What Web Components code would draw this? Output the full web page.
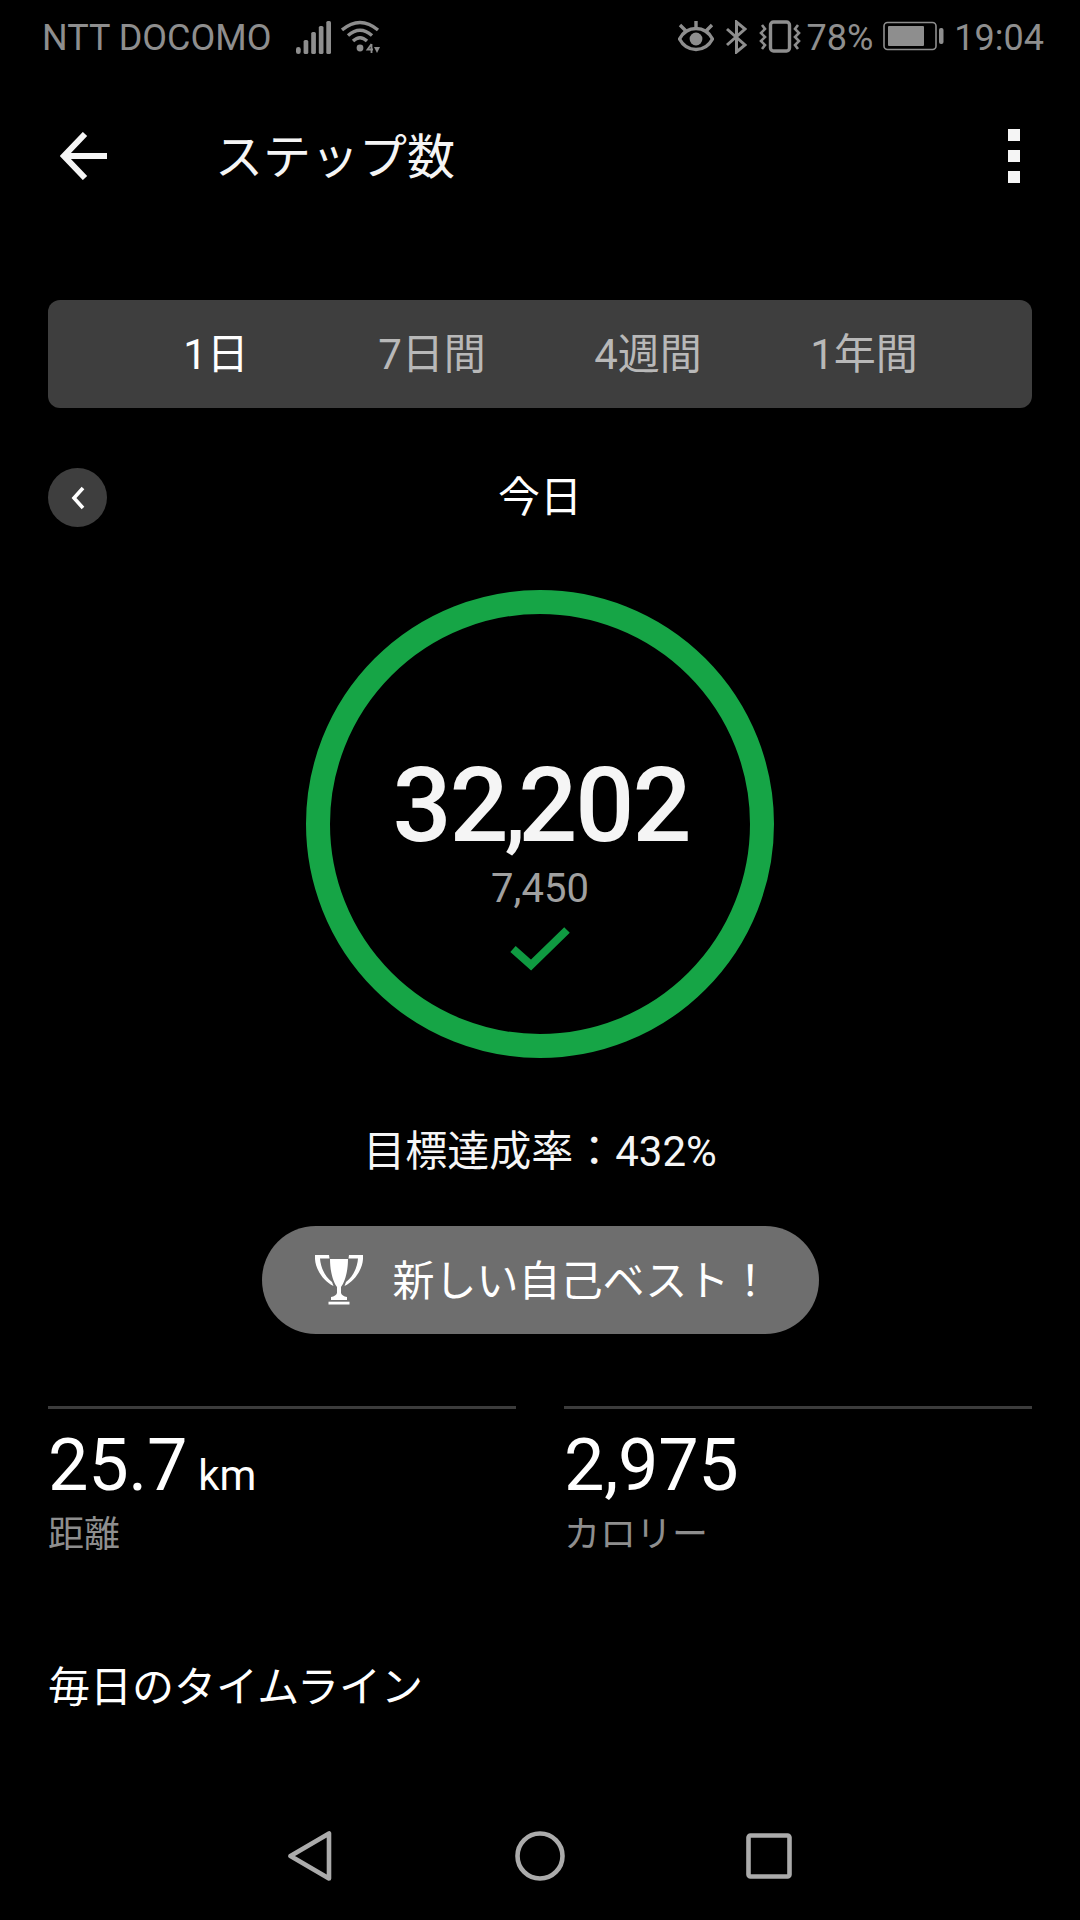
<!DOCTYPE html>
<html lang="ja">
<head>
<meta charset="utf-8">
<title>ステップ数</title>
<style>
  html, body {
    background: #000;
    margin: 0;
    padding: 0;
  }

  body {
    color: #f5f5f5;
    font-family: Roboto, 'Noto Sans CJK JP', sans-serif;
    height: 1920px;
    overflow: hidden;
    width: 1080px;
  }
</style>
</head>
<body>
<step-screen>
  <status-bar></status-bar>
  <app-bar title="ステップ数"></app-bar>
  <range-tabs></range-tabs>
  <day-header label="今日"></day-header>
  <step-ring steps="32,202" goal="7,450"></step-ring>
  <goal-rate>目標達成率：432%</goal-rate>
  <best-pill>新しい自己ベスト！</best-pill>
  <stat-row>
    <stat-cell label="距離" value="25.7" unit="km"></stat-cell>
    <stat-cell label="カロリー" value="2,975"></stat-cell>
  </stat-row>
  <section-title>毎日のタイムライン</section-title>
  <nav-bar></nav-bar>
</step-screen>

<script>
  // Small helper, every element below renders once into an open shadow root
  class BaseElement extends HTMLElement {
    constructor() {
      super();
      this.attachShadow( {mode: 'open'} );
    }

    connectedCallback() {
      this.shadowRoot.innerHTML = this.render();
    }

    attr( name ) {
      return this.hasAttribute( name ) ? this.getAttribute( name ) : '';
    }
  }

  class StepScreen extends BaseElement {
    render() {
      return /* template */ `
        <style>
          :host {
            box-sizing: border-box;
            display: flex;
            flex-direction: column;
            height: 1920px;
            width: 1080px;
          }
        </style>
        <slot></slot>
      `;
    }
  }

  class StatusBar extends BaseElement {
    render() {
      return /* template */ `
        <style>
          :host {
            align-items: center;
            box-sizing: border-box;
            color: #8e8e8e;
            display: flex;
            flex-direction: row;
            font-size: 36px;
            height: 72px;
            padding: 2px 36px 0 42px;
          }

          span {
            line-height: 72px;
            padding-top: 1px;
          }

          svg {
            display: block;
            flex: none;
          }

          .carrier {
            align-items: center;
            display: flex;
            flex-grow: 1;
          }
        </style>
        <div class="carrier">
          <span>NTT DOCOMO</span>
          <svg style="margin-left: 25px" width="35" height="33" viewBox="0 0 35 33" fill="#8e8e8e">
            <rect x="0" y="26" width="4.7" height="7" rx="2.3"/>
            <rect x="7.6" y="19" width="4.7" height="14" rx="1.6"/>
            <rect x="15.2" y="11" width="4.7" height="22" rx="1.6"/>
            <rect x="22.8" y="5" width="4.7" height="28" rx="1.6"/>
            <rect x="30.3" y="0" width="4.7" height="33" rx="1.6"/>
          </svg>
          <svg style="margin-left: 10px" width="39" height="34" viewBox="0 0 39 34" fill="none" stroke="#8e8e8e" stroke-width="3.4">
            <path d="M1 10 Q19 -5 37 10"/>
            <path d="M7 15.5 Q19 5 31 15.5"/>
            <path d="M12 21 Q19 14.5 26 21"/>
            <circle cx="19" cy="28" r="3.4" fill="#8e8e8e" stroke="none"/>
            <path d="M30.5 24 L26.5 29.5 H32 M30.5 24 V33" stroke-width="1.8"/>
            <path d="M33 27 H39 L36 33 Z" fill="#8e8e8e" stroke="none"/>
          </svg>
        </div>
        <svg width="36" height="32" viewBox="0 0 36 32" fill="none" stroke="#8e8e8e" stroke-width="3.4">
          <path d="M1.5 18 C9 4 27 4 34.5 18 C27 32 9 32 1.5 18 Z"/>
          <circle cx="18" cy="18" r="6.4" fill="#8e8e8e" stroke="none"/>
          <path d="M2 4 L8 10 M18 0 V6 M34 4 L28 10"/>
        </svg>
        <svg style="margin-left: 12px" width="21" height="34" viewBox="0 0 21 34" fill="none" stroke="#8e8e8e" stroke-width="3">
          <path d="M1 9 L19 25 L10.5 32 V2 L19 9 L1 25"/>
        </svg>
        <svg style="margin-left: 12px" width="42" height="34" viewBox="0 0 42 34" fill="none" stroke="#8e8e8e" stroke-width="3">
          <rect x="11.5" y="2" width="19" height="29" rx="3" stroke-width="3.4"/>
          <path d="M3 5 L6 9 L2 13 L6 17 L2 21 L6 25 L3 29" stroke-width="2.6"/>
          <path d="M39 5 L36 9 L40 13 L36 17 L40 21 L36 25 L39 29" stroke-width="2.6"/>
        </svg>
        <span style="margin-left: 6px">78%</span>
        <svg style="margin-left: 10px" width="61" height="32" viewBox="0 0 61 32">
          <rect x="1" y="1.5" width="52" height="27" rx="3.5" fill="none" stroke="#8e8e8e" stroke-width="1.6"/>
          <rect x="5" y="5" width="36" height="20" rx="1" fill="#8e8e8e"/>
          <rect x="56" y="7" width="4.5" height="16" rx="2" fill="#8e8e8e"/>
        </svg>
        <span style="margin-left: 10px">19:04</span>
      `;
    }
  }

  class AppBar extends BaseElement {
    render() {
      return /* template */ `
        <style>
          :host {
            align-items: center;
            box-sizing: border-box;
            display: flex;
            flex-direction: row;
            height: 168px;
            padding: 0 60px 0 60px;
          }

          h1 {
            flex-grow: 1;
            font-family: 'Noto Sans CJK JP', sans-serif;
            font-size: 48px;
            font-weight: 400;
            margin: 0 0 6px 108px;
          }

          div {
            display: flex;
            flex-direction: column;
            gap: 9px;
          }

          i {
            background: #f5f5f5;
            display: block;
            height: 12px;
            width: 12px;
          }
        </style>
        <svg width="47" height="48" viewBox="0 0 47 48" fill="none" stroke="#f5f5f5" stroke-width="6">
          <path d="M47 24 H4"/>
          <path d="M25 2 L4 24 L25 46"/>
        </svg>
        <h1>${this.attr( 'title' )}</h1>
        <div><i></i><i></i><i></i></div>
      `;
    }
  }

  class RangeTabs extends BaseElement {
    render() {
      const tabs = ['1日', '7日間', '4週間', '1年間'];

      return /* template */ `
        <style>
          :host {
            background: #3e3e3e;
            border-radius: 12px;
            box-sizing: border-box;
            display: grid;
            grid-template-columns: repeat( 4, 216px );
            height: 108px;
            justify-content: center;
            margin: 60px 48px 0 48px;
          }

          span {
            color: #b8b8b8;
            font-size: 42px;
            line-height: 110px;
            text-align: center;
          }

          span:first-of-type {
            color: #fff;
          }
        </style>
        ${tabs.map( ( tab ) => `<span>${tab}</span>` ).join( '' )}
      `;
    }
  }

  class DayHeader extends BaseElement {
    render() {
      return /* template */ `
        <style>
          :host {
            align-items: center;
            display: grid;
            grid-template-columns: 59px 1fr 59px;
            margin: 60px 48px 0 48px;
          }

          button {
            align-items: center;
            background: #3e3e3e;
            border: none;
            border-radius: 50%;
            display: flex;
            height: 59px;
            justify-content: center;
            padding: 0;
            width: 59px;
          }

          span {
            color: #fff;
            font-size: 42px;
            line-height: 52px;
            text-align: center;
          }
        </style>
        <button>
          <svg width="14" height="24" viewBox="0 0 14 24" fill="none" stroke="#fff" stroke-width="3.6">
            <path d="M12 2 L3 12 L12 22"/>
          </svg>
        </button>
        <span>${this.attr( 'label' )}</span>
      `;
    }
  }

  class StepRing extends BaseElement {
    render() {
      // The comma sits tight between the digits
      const steps = this.attr( 'steps' ).replace( /(\d),/, '<span class="tail">$1</span><span class="comma">,</span>' );

      return /* template */ `
        <style>
          :host {
            align-items: center;
            align-self: center;
            box-sizing: border-box;
            display: flex;
            flex-direction: column;
            height: 468px;
            margin-top: 63px;
            position: relative;
            width: 468px;
          }

          svg.ring {
            left: 0;
            position: absolute;
            top: 0;
          }

          .steps {
            color: #f5f5f5;
            font-size: 104px;
            font-weight: 500;
            letter-spacing: -2px;
            line-height: 104px;
            margin-top: 164px;
            padding-left: 2px;
          }

          .tail {
            letter-spacing: -4px;
          }

          .comma {
            font-size: 92px;
            letter-spacing: -7px;
          }

          .goal {
            color: #a0a0a0;
            font-size: 40px;
            line-height: 46px;
            margin-top: 4px;
          }

          .check {
            margin-top: 15px;
          }
        </style>
        <svg class="ring" width="468" height="468" viewBox="0 0 468 468">
          <circle cx="234" cy="234" r="222" fill="none" stroke="#16a546" stroke-width="24"/>
        </svg>
        <div class="steps">${steps}</div>
        <div class="goal">${this.attr( 'goal' )}</div>
        <svg class="check" width="60" height="44" viewBox="0 0 60 44" fill="none" stroke="#0f9a41" stroke-width="8">
          <path d="M3 22 L21 38 L57 3"/>
        </svg>
      `;
    }
  }

  class GoalRate extends BaseElement {
    render() {
      return /* template */ `
        <style>
          :host {
            color: #f5f5f5;
            display: block;
            font-size: 42px;
            line-height: 60px;
            margin-top: 64px;
            text-align: center;
          }
        </style>
        <slot></slot>
      `;
    }
  }

  class BestPill extends BaseElement {
    render() {
      return /* template */ `
        <style>
          :host {
            align-items: center;
            align-self: center;
            background: #6e6e6e;
            border-radius: 54px;
            box-sizing: border-box;
            color: #fff;
            display: flex;
            flex-direction: row;
            font-size: 42px;
            gap: 29px;
            height: 108px;
            margin-top: 44px;
            padding: 0 0 0 52px;
            width: 557px;
          }

          svg {
            flex: none;
          }

          span {
            margin-bottom: 6px;
          }
        </style>
        <svg width="50" height="50" viewBox="0 0 50 50" fill="#fff">
          <path d="M16 4 H34 C34 16 31 27 27 32 V38 Q28 41 33 42 V45 H17 V42 Q22 41 23 38 V32 C19 27 16 16 16 4 Z"/>
          <path d="M1 0 H15 L15.5 3.5 H6 C6.5 12 11 22 18 27 L19.5 31 C9 26 1.5 14 1 4 Z"/>
          <path d="M49 0 H35 L34.5 3.5 H44 C43.5 12 39 22 32 27 L30.5 31 C41 26 48.5 14 49 4 Z"/>
          <rect x="14.5" y="46.7" width="21" height="2.8"/>
        </svg>
        <span><slot></slot></span>
      `;
    }
  }

  class StatRow extends BaseElement {
    render() {
      return /* template */ `
        <style>
          :host {
            display: grid;
            gap: 48px;
            grid-template-columns: 1fr 1fr;
            margin: 72px 48px 0 48px;
          }
        </style>
        <slot></slot>
      `;
    }
  }

  class StatCell extends BaseElement {
    render() {
      const unit = this.attr( 'unit' );

      return /* template */ `
        <style>
          :host {
            border-top: solid 3px #3c3c3c;
            display: block;
          }

          .value {
            color: #fff;
            font-size: 72px;
            letter-spacing: -0.3px;
            line-height: 84px;
            margin-top: 15px;
            white-space: nowrap;
          }

          .unit {
            font-size: 42px;
            letter-spacing: 0;
            line-height: 1;
            margin-left: 11px;
          }

          .label {
            color: #8e8e8e;
            font-size: 36px;
            line-height: 50px;
            margin-top: 2px;
          }
        </style>
        <div class="value">${this.attr( 'value' )}${unit ? `<span class="unit">${unit}</span>` : ''}</div>
        <div class="label">${this.attr( 'label' )}</div>
      `;
    }
  }

  class SectionTitle extends BaseElement {
    render() {
      return /* template */ `
        <style>
          :host {
            color: #fff;
            display: block;
            font-size: 42px;
            line-height: 60px;
            margin: 98px 48px 0 48px;
          }
        </style>
        <slot></slot>
      `;
    }
  }

  class NavBar extends BaseElement {
    render() {
      return /* template */ `
        <style>
          :host {
            align-items: center;
            display: flex;
            flex-direction: row;
            height: 72px;
            justify-content: center;
            margin-top: auto;
            padding-bottom: 28px;
          }

          svg + svg {
            margin-left: 183px;
          }

          svg + svg + svg {
            margin-left: 181px;
          }
        </style>
        <svg width="44" height="50" viewBox="0 0 44 50" fill="none" stroke="#ababab" stroke-width="4.6" stroke-linejoin="round">
          <path d="M41 2.5 V47.5 L2.5 25 Z"/>
        </svg>
        <svg width="50" height="50" viewBox="0 0 50 50" fill="none" stroke="#ababab" stroke-width="4.6">
          <circle cx="25" cy="25" r="22.5"/>
        </svg>
        <svg width="46" height="46" viewBox="0 0 46 46" fill="none" stroke="#ababab" stroke-width="4.6" stroke-linejoin="round">
          <rect x="2.5" y="2.5" width="41" height="41" rx="2"/>
        </svg>
      `;
    }
  }

  window.customElements.define( 'step-screen', StepScreen );
  window.customElements.define( 'status-bar', StatusBar );
  window.customElements.define( 'app-bar', AppBar );
  window.customElements.define( 'range-tabs', RangeTabs );
  window.customElements.define( 'day-header', DayHeader );
  window.customElements.define( 'step-ring', StepRing );
  window.customElements.define( 'goal-rate', GoalRate );
  window.customElements.define( 'best-pill', BestPill );
  window.customElements.define( 'stat-row', StatRow );
  window.customElements.define( 'stat-cell', StatCell );
  window.customElements.define( 'section-title', SectionTitle );
  window.customElements.define( 'nav-bar', NavBar );
</script>
</body>
</html>
